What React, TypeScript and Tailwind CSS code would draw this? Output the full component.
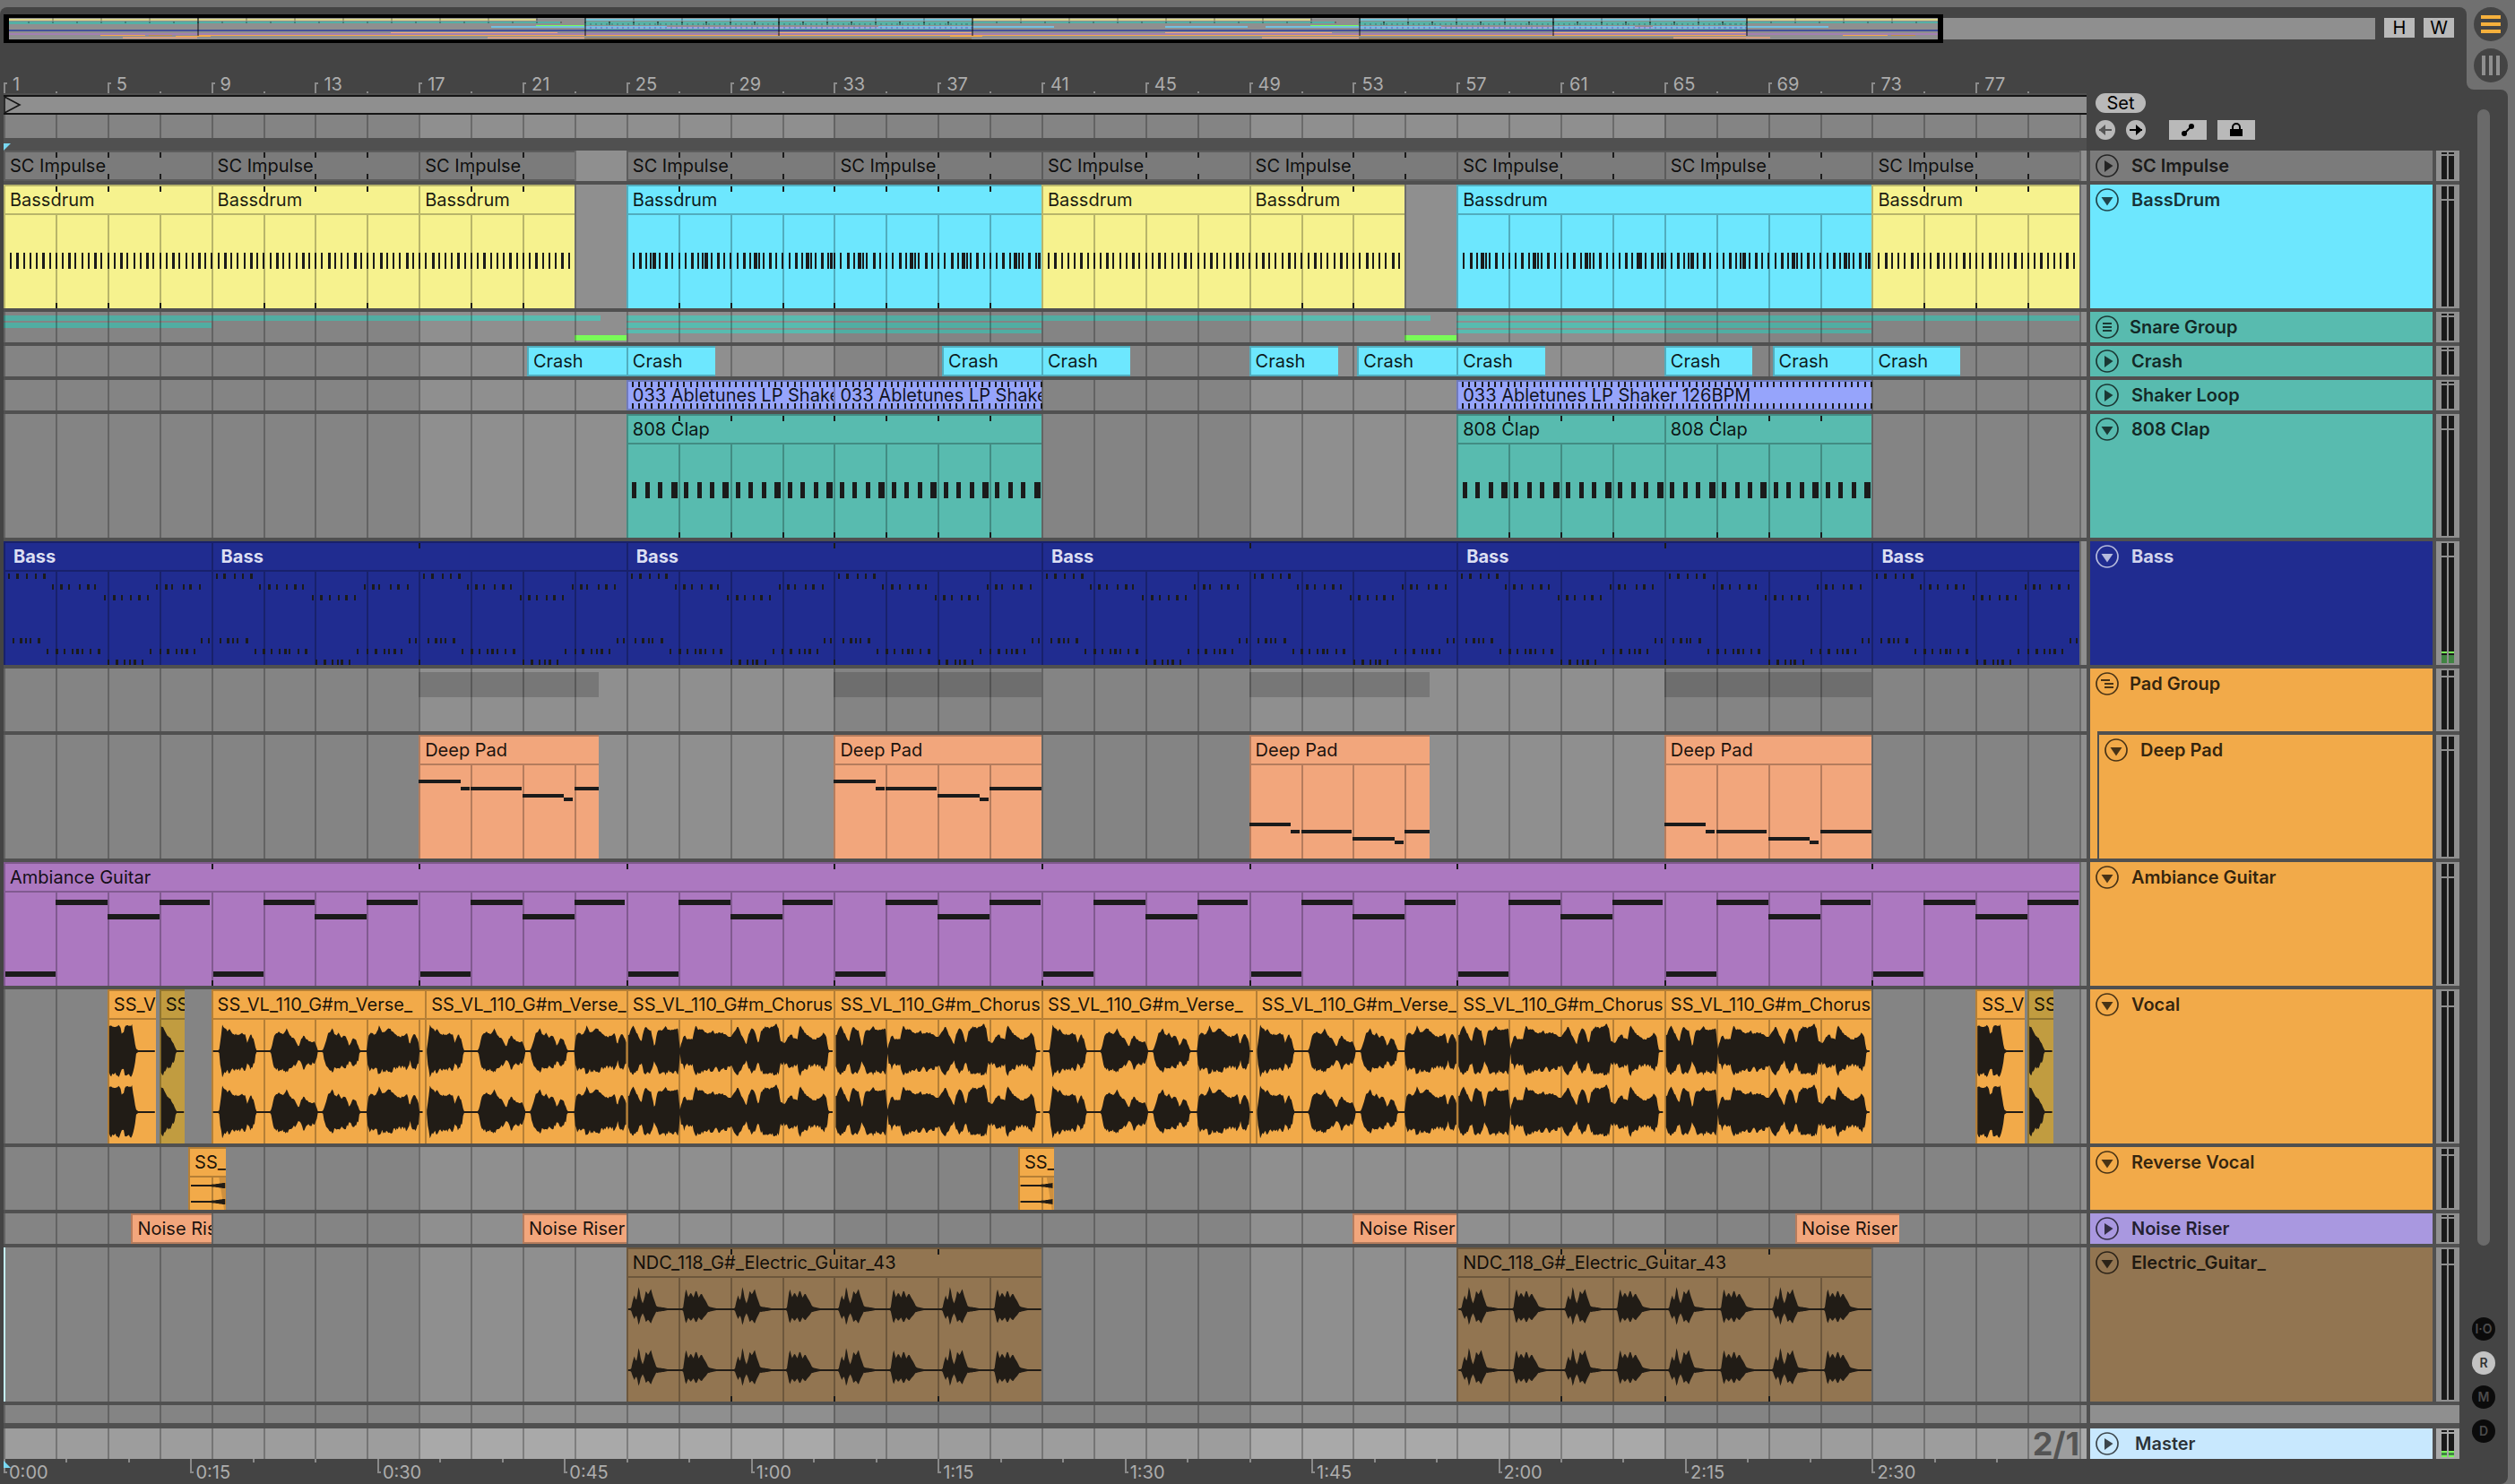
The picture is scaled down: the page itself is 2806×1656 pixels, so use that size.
import React from "react";

const BARS = 80;
const CELLS = Array.from({ length: 40 }, (_, i) => i);
const pct = (bars: number) => `${(bars / BARS) * 100}%`;

type ClipData = { from: number; to: number; name: string; color: string };
type Rect = [x: number, y: number, w: number, h: number];
type Strip = { from: number; to: number; y: number; h: number; color: string };
type Track = {
  name: string;
  height: string;
  px: number;
  color: string;
  icon: "right" | "down" | "group" | "groupOpen";
  clips?: ClipData[];
  strips?: Strip[];
  notes?: Rect[];
  ticks?: number[];
  waves?: string[];
  fades?: string[];
  light?: boolean;
  nested?: boolean;
  level?: "bass" | "master";
  marker?: boolean;
};

const YELLOW = "bg-[#f6f28e]";
const CYAN = "bg-[#6de7fe]";
const TEAL = "bg-[#58bbaf]";
const GREEN = "bg-[#79fb58]";
const PEACH = "bg-[#f2a67c]";
const ORANGE = "bg-[#f2aa49]";
const OLIVE = "bg-[#c19c40]";
const BROWN = "bg-[#927551]";
const BLUE = "bg-[#202c90]";
const PURPLE = "bg-[#ac78c0]";
const PERIWINKLE = "bg-[#96a4fb]";
const GRAY = "bg-[#7b7b7b]";

const PX = 0.0691 / 2;

const clip = (name: string, color: string, ...spans: [number, number][]): ClipData[] =>
  spans.map(([from, to]) => ({ from, to, name, color }));

const range = (from: number, to: number, step: number) => {
  const out: number[] = [];
  for (let v = from; v < to - 0.001; v += step) out.push(v);
  return out;
};

/* ---------- note patterns ---------- */

const kickNotes: Rect[] = [];
const kick = (from: number, to: number, busy: boolean) => {
  range(from + 0.28, to, 0.25).forEach((b, i) => {
    kickNotes.push([b - PX, 76, PX * (i % 4 === 1 ? 3 : 2), 18]);
  });
  if (busy) {
    range(from, to, 2).forEach((b) => {
      kickNotes.push([b + 0.92, 76, PX * 2, 18]);
      kickNotes.push([b + 1.09, 76, PX * 2, 18]);
    });
    range(from + 7.86, to, 8).forEach((b) => kickNotes.push([b, 76, PX * 3, 18]));
  }
};
kick(1, 23, false);
kick(25, 41, true);
kick(41, 55, false);
kick(57, 73, true);
kick(73, 81, false);

const clapNotes: Rect[] = [[25, 41], [57, 73]].flatMap(([a, b]) =>
  range(a + 0.22, b, 0.5).map((x, i): Rect => [x, 76, PX * (i % 4 === 3 ? 7 : 5), 18]),
);

const shakerTicks = [...range(25.2, 41, 0.25), ...range(57.2, 73, 0.25)];

const BASS_ROWS: [number, number[]][] = [
  [36, [0.21, 0.51, 0.91, 1.24, 1.54]],
  [48, [1.89, 2.22, 2.53, 2.92, 3.24, 3.54, 5.92, 6.24, 6.49, 6.93, 7.2, 7.57]],
  [60, [3.92, 4.24, 4.56, 4.92, 5.2, 5.55]],
  [108, [0.37, 0.64, 0.86, 1.02, 1.35, 7.65, 7.9]],
  [120, [1.69, 2.03, 2.34, 2.65, 2.84, 3.03, 3.35, 3.65, 5.66, 6.03, 6.33, 6.67, 6.87, 7.05, 7.35]],
  [132, [4.05, 4.35, 4.67, 4.87, 5.03, 5.35]],
];
const bassNotes: Rect[] = range(1, 81, 8).flatMap((o) =>
  BASS_ROWS.flatMap(([y, xs]) =>
    xs.map((x, i): Rect => [o + x - PX, y, PX * (i % 3 === 1 ? 3 : 2), 6]),
  ),
);

const padPhrase = (o: number, dy: number, end: number): Rect[] => [
  [o, 50 + dy, 1.6, 4],
  [o + 1.6, 58 + dy, 0.35, 4],
  [o + 2, 58 + dy, 1.95, 4],
  [o + 4, 66 + dy, 1.6, 4],
  [o + 5.6, 70 + dy, 0.35, 4],
  [o + 6, 58 + dy, end - o - 6, 4],
];
const padNotes = [
  ...padPhrase(17, 0, 23.93),
  ...padPhrase(33, 0, 41),
  ...padPhrase(49, 48, 55.96),
  ...padPhrase(65, 48, 73),
];

const guitarNotes: Rect[] = range(1, 81, 8).flatMap((o): Rect[] => [
  [o + 0.07, 122, 1.93, 6],
  [o + 2, 42, 2, 6],
  [o + 4, 58, 2, 6],
  [o + 6, 42, 1.95, 6],
]);

/* ---------- wave forms ---------- */

type Env = [number, number][];

const scaleEnv = (pts: [number, number][], x0: number, unit: number): Env =>
  pts.map(([x, a]) => [(x - x0) / unit, a]);

const VERSE = scaleEnv(
  [
    [516, 0], [535, 0], [539, 14], [543, 29], [548, 26], [556, 22], [560, 25], [566, 20], [580, 18], [590, 20],
    [600, 18], [603, 9], [608, 16], [613, 19], [619, 13], [626, 0], [660, 0], [665, 8], [670, 18], [678, 21],
    [686, 20], [694, 20], [699, 26], [704, 20], [712, 15], [720, 13], [728, 5], [734, 12], [741, 18], [748, 13],
    [758, 11], [769, 10], [776, 0], [786, 0], [792, 6], [800, 20], [805, 21], [810, 26], [815, 20], [820, 18],
    [826, 21], [832, 15], [839, 18], [845, 15], [852, 5], [858, 12], [863, 15], [869, 12], [878, 0], [894, 0],
    [898, 18], [904, 21], [912, 19], [919, 21], [924, 29], [930, 22], [938, 21], [945, 24], [950, 26], [956, 22],
    [965, 18], [975, 16], [985, 17], [992, 20], [999, 7], [1005, 17], [1012, 19], [1018, 14], [1023, 3], [1027, 0],
  ],
  516,
  63.07,
);

const CHORUS = scaleEnv(
  [
    [147, 18], [154, 17], [160, 25], [166, 29], [173, 22], [180, 16], [187, 9], [191, 20], [197, 27], [204, 25],
    [212, 23], [218, 12], [222, 4], [227, 18], [232, 24], [240, 23], [250, 28], [260, 23], [272, 24], [284, 25],
    [289, 2], [293, 10], [301, 18], [308, 13], [316, 13], [323, 14], [331, 29], [338, 24], [346, 25], [356, 21],
    [364, 19], [376, 23], [384, 19], [394, 21], [404, 20], [412, 19], [420, 15], [428, 18], [436, 23], [443, 28],
    [450, 20], [458, 14], [465, 7], [472, 20], [480, 27], [488, 22], [497, 8], [504, 22], [515, 27], [525, 26],
    [535, 28], [545, 30], [551, 25], [556, 10], [568, 10], [575, 15], [583, 20], [590, 15], [600, 13], [607, 29],
    [614, 24], [622, 20], [632, 16], [645, 13], [658, 15], [665, 17], [671, 21], [677, 16], [683, 2], [687, 0],
  ],
  147,
  68.8,
);

const GUITAR = scaleEnv(
  [
    [147, 0], [159, 0], [163, 8], [168, 16], [173, 9], [176, 14], [180, 27], [184, 15], [190, 6], [195, 12],
    [199, 21], [205, 16], [212, 23], [217, 15], [222, 9], [227, 3], [245, 2], [270, 0], [297, 0], [301, 12],
    [305, 24], [311, 13], [318, 19], [325, 13], [332, 22], [339, 13], [346, 18], [352, 13], [358, 9], [365, 3],
    [385, 1], [420, 0],
  ],
  147,
  68.8,
);

const level = (env: Env, t: number) => {
  for (let i = 1; i < env.length; i++) {
    if (t <= env[i][0]) {
      const [x0, a0] = env[i - 1];
      const [x1, a1] = env[i];
      return a0 + ((a1 - a0) * (t - x0)) / (x1 - x0 || 1);
    }
  }
  return 0;
};

const jitter = (n: number) => {
  const s = Math.sin(n * 127.1) * 43758.5453;
  return s - Math.floor(s) - 0.5;
};

/* Mirrored envelope between two bars; the phrase restarts every `period` bars counted from `origin`. */
const wave = (from: number, to: number, origin: number, env: Env, period: number, cy: number) => {
  const top: string[] = [];
  const bottom: string[] = [];
  const plucked = env === GUITAR;
  for (let b = from + 0.07; b <= to; b += 0.04) {
    const t = (b - origin) % period;
    const a = level(env, t);
    const n = Math.round(t * 25);
    const up = Math.max(1, a + (a > 6 && !plucked ? jitter(n) * 2 : 0));
    const low = plucked ? a * 0.7 : a * 0.7 + 6.5 + jitter(n + 400) * 5;
    const down = Math.max(1, a > 4 ? low : a);
    top.push(`${(b - 1).toFixed(3)} ${(cy - up).toFixed(1)}`);
    bottom.unshift(`${(b - 1).toFixed(3)} ${(cy + down).toFixed(1)}`);
  }
  return `M${top.join("L")}L${bottom.join("L")}Z`;
};

const stereo = (from: number, to: number, origin: number, env: Env, period: number, c1: number, c2: number) => [
  wave(from, to, origin, env, period, c1),
  wave(from, to, origin, env, period, c2),
];

const STAB: Env = [[0, 26], [0.1, 28], [0.25, 27], [0.42, 29], [0.5, 28], [0.55, 19], [0.62, 20], [0.68, 28], [0.95, 29], [1, 20], [1.1, 3], [1.18, 1], [2, 0]];
const DECAY: Env = [[0, 28], [0.15, 26], [0.3, 18], [0.4, 16], [0.55, 8], [0.68, 0], [1, 0]];
const SWELL: Env = [[0, 0], [0.8, 1], [1.1, 2], [1.3, 3], [1.42, 3]];

const vocalWaves = [
  ...stereo(5, 6.87, 5, STAB, 8, 69, 137),
  ...stereo(7, 7.98, 7, DECAY, 8, 69, 137),
  ...stereo(9, 17.15, 9, VERSE, 8, 69, 137),
  ...stereo(17.24, 25, 17, VERSE, 8, 69, 137),
  ...stereo(25, 32.95, 25, CHORUS, 8, 69, 137),
  ...stereo(33, 40.95, 33, CHORUS, 8, 69, 137),
  ...stereo(41, 49.15, 41, VERSE, 8, 69, 137),
  ...stereo(49.24, 57, 49, VERSE, 8, 69, 137),
  ...stereo(57, 64.95, 57, CHORUS, 8, 69, 137),
  ...stereo(65, 72.95, 65, CHORUS, 8, 69, 137),
  ...stereo(77, 78.87, 77, STAB, 8, 69, 137),
  ...stereo(79, 79.98, 79, DECAY, 8, 69, 137),
];
const reverseWaves = [
  ...stereo(8.15, 9.57, 8.15, SWELL, 8, 43, 61),
  ...stereo(40.12, 41.45, 40.12, SWELL, 8, 43, 61),
];
const electricWaves = [
  ...stereo(25, 41, 25, GUITAR, 4, 69, 137),
  ...stereo(57, 73, 57, GUITAR, 4, 69, 137),
];

/* ---------- tracks ---------- */

const teal = (from: number, to: number, y: number, h: number): Strip => ({ from, to, y, h, color: TEAL });
const shade = (from: number, to: number): Strip => ({ from, to, y: 4, h: 28, color: "bg-[#777777]" });

const TRACKS: Track[] = [
  {
    name: "SC Impulse", height: "h-[34px]", px: 34, color: GRAY, icon: "right",
    clips: clip("SC Impulse", GRAY, [1, 9], [9, 17], [17, 23], [25, 33], [33, 41], [41, 49], [49, 57], [57, 65], [65, 73], [73, 81]),
    ticks: range(3, 81, 2).filter((b) => b % 8 !== 1 && b !== 23),
  },
  {
    name: "BassDrum", height: "h-[138px]", px: 138, color: CYAN, icon: "down",
    clips: [
      ...clip("Bassdrum", YELLOW, [1, 9], [9, 17], [17, 23], [41, 49], [49, 55], [73, 81]),
      ...clip("Bassdrum", CYAN, [25, 41], [57, 73]),
    ],
    notes: kickNotes,
    ticks: [3, 5, 7, 11, 13, 15, 19, 21, 27, 29, 31, 33, 35, 37, 39, 51, 53, 75, 77, 79],
  },
  {
    name: "Snare Group", height: "h-[34px]", px: 34, color: TEAL, icon: "group",
    strips: [
      teal(1, 24, 4, 6), teal(25, 56, 4, 6), teal(57, 81, 4, 6),
      teal(1, 9, 12, 6), teal(25, 41, 12, 6), teal(57, 73, 12, 6),
      teal(25, 41, 20, 4), teal(57, 73, 20, 4),
      { from: 23, to: 25, y: 26, h: 6, color: GREEN },
      { from: 55, to: 57, y: 26, h: 6, color: GREEN },
    ],
  },
  {
    name: "Crash", height: "h-[34px]", px: 34, color: TEAL, icon: "right",
    clips: clip("Crash", CYAN, [21.17, 25], [25, 28.42], [37.17, 41], [41, 44.43], [49, 52.42], [53.17, 57], [57, 60.42], [65, 68.4], [69.17, 73], [73, 76.42]),
  },
  {
    name: "Shaker Loop", height: "h-[34px]", px: 34, color: TEAL, icon: "right",
    clips: clip("033 Abletunes LP Shaker 126BPM", PERIWINKLE, [25, 33], [33, 41], [57, 73]),
    ticks: shakerTicks,
  },
  {
    name: "808 Clap", height: "h-[138px]", px: 138, color: TEAL, icon: "down",
    clips: clip("808 Clap", TEAL, [25, 41], [57, 65], [65, 73]),
    notes: clapNotes,
    ticks: [27, 29, 31, 33, 35, 37, 39, 59, 61, 63, 67, 69, 71],
  },
  {
    name: "Bass", height: "h-[138px]", px: 138, color: BLUE, icon: "down", light: true, level: "bass",
    clips: clip("Bass", BLUE, [1, 9], [9, 25], [25, 41], [41, 57], [57, 73], [73, 81]),
    notes: bassNotes,
    ticks: [17, 33, 49, 65],
  },
  {
    name: "Pad Group", height: "h-[70px]", px: 70, color: ORANGE, icon: "groupOpen",
    strips: [shade(17, 23.93), shade(33, 41), shade(49, 55.96), shade(65, 73)],
  },
  {
    name: "Deep Pad", height: "h-[138px]", px: 138, color: ORANGE, icon: "down", nested: true,
    clips: clip("Deep Pad", PEACH, [17, 23.93], [33, 41], [49, 55.96], [65, 73]),
    notes: padNotes,
  },
  {
    name: "Ambiance Guitar", height: "h-[138px]", px: 138, color: ORANGE, icon: "down",
    clips: clip("Ambiance Guitar", PURPLE, [1, 81]),
    notes: guitarNotes,
    ticks: range(9, 81, 8),
  },
  {
    name: "Vocal", height: "h-[172px]", px: 172, color: ORANGE, icon: "down",
    clips: [
      ...clip("SS_V", ORANGE, [5, 6.87], [77, 78.9]),
      ...clip("SS", OLIVE, [7, 7.98], [79, 80]),
      ...clip("SS_VL_110_G#m_Verse_", ORANGE, [9, 17.24], [17.24, 25], [41, 49.24], [49.24, 57]),
      ...clip("SS_VL_110_G#m_Chorus", ORANGE, [25, 33], [33, 41], [57, 65], [65, 73]),
    ],
    waves: vocalWaves,
  },
  {
    name: "Reverse Vocal", height: "h-[70px]", px: 70, color: ORANGE, icon: "down",
    clips: clip("SS_", ORANGE, [8.12, 9.57], [40.1, 41.47]),
    waves: reverseWaves,
    fades: ["M8.3 34H8.57V70H8.5Z", "M40.2 34H40.47V70H40.4Z"],
  },
  {
    name: "Noise Riser", height: "h-[34px]", px: 34, color: "bg-[#a998e0]", icon: "right",
    clips: clip("Noise Riser", PEACH, [5.92, 9], [21, 25], [53, 57], [70.05, 74.05]),
  },
  {
    name: "Electric_Guitar_", height: "h-[172px]", px: 172, color: BROWN, icon: "down", marker: true,
    clips: clip("NDC_118_G#_Electric_Guitar_43", BROWN, [25, 41], [57, 73]),
    ticks: [29, 33, 37, 61, 65, 69],
    waves: electricWaves,
  },
];

/* ---------- parts ---------- */

function Clip({ data, light }: { data: ClipData; light?: boolean }) {
  return (
    <div
      className={`absolute inset-y-0 overflow-hidden border-l-2 border-black/25 ${data.color}`}
      style={{ left: pct(data.from - 1), width: pct(data.to - data.from) }}
    >
      <div
        className={`flex h-[34px] items-center border-y-2 border-black/25 whitespace-nowrap ${
          light ? "pl-[9px] font-bold text-[#dcdff2]" : "pl-[5px] text-black/90"
        }`}
      >
        {data.name}
      </div>
    </div>
  );
}

function LaneDrawing({ track }: { track: Track }) {
  const { px, clips = [], notes = [], ticks = [], waves = [], fades = [] } = track;
  const lines = px > 34
    ? clips.flatMap((c) => range(1, 81, 2).filter((b) => b > c.from + 0.05 && b < c.to - 0.05))
    : [];
  const rects = (list: Rect[]) => list.map(([x, y, w, h]) => `M${(x - 1).toFixed(3)} ${y}h${w.toFixed(4)}v${h}h${(-w).toFixed(4)}z`).join("");
  const tickRects: Rect[] = ticks.flatMap((b): Rect[] => [
    [b, 2, PX * 2, 6],
    [b, px > 34 ? px - 6 : px - 8, PX * 2, 6],
  ]);
  return (
    <svg
      className="absolute inset-0 h-full w-full"
      viewBox={`0 0 ${BARS} ${px}`}
      preserveAspectRatio="none"
      aria-hidden="true"
    >
      <path d={rects(lines.map((b): Rect => [b, 34, PX * 2, px - 34]))} fill="#000" fillOpacity="0.25" shapeRendering="crispEdges" />
      {fades.map((d) => <path key={d} d={d} fill="#000" fillOpacity="0.15" />)}
      <path d={rects([...tickRects, ...notes])} fill="#1b1b1b" shapeRendering="crispEdges" />
      {waves.map((d) => <path key={d} d={d} fill="#211c16" />)}
    </svg>
  );
}

function Lane({ base = "bg-[#8f8f8f]", children, between }: { base?: string; children?: React.ReactNode; between?: React.ReactNode }) {
  return (
    <div className={`flex min-w-0 flex-1 ${base}`}>
      <div className="relative min-w-0 flex-1">
        {between}
        <div className="absolute inset-0 grid grid-cols-[repeat(40,minmax(0,1fr))]">
          {CELLS.map((i) => (
            <div key={i} className={`border-l-2 border-black/25 ${Math.floor(i / 8) % 2 ? "" : "bg-black/[0.07]"}`} />
          ))}
        </div>
        {children}
      </div>
      <div className="w-2 border-l-2 border-black/25" />
    </div>
  );
}

function FoldIcon({ kind }: { kind: Track["icon"] }) {
  return (
    <svg viewBox="0 0 26 26" className="size-[26px]" fill="none" stroke="currentColor" strokeWidth="1.7" aria-hidden="true">
      <circle cx="13" cy="13" r="12" />
      {kind === "right" && <path d="M10 7L19.500 13L10 20Z" fill="currentColor" stroke="none" />}
      {kind === "down" && <path d="M6.500 10H19.500L13 19.500Z" fill="currentColor" stroke="none" />}
      {kind === "group" && <path d="M8 9H18M8 13H18M8 17H18" strokeWidth="2" />}
      {kind === "groupOpen" && <path d="M6 9H16M10 13H20M10 17H20" strokeWidth="2" />}
    </svg>
  );
}

function MeterBar({ px, level: lv }: { px: number; level?: Track["level"] }) {
  const head = px === 34 ? "h-0.5" : px === 70 ? "h-1.5" : px === 138 ? "h-3.5" : "h-4";
  return (
    <div className="flex w-1.5 flex-col gap-0.5">
      <div className={`bg-[#191919] ${head}`} />
      <div className="flex flex-1 flex-col justify-end bg-[#191919]">
        {lv === "bass" && (
          <>
            <div className="mb-0.5 h-0.5 bg-[#79fb58]" />
            <div className="h-[9px] bg-[#418443]" />
          </>
        )}
        {lv === "master" && (
          <>
            <div className="h-0.5 bg-[#79fb58]" />
            <div className="h-[3px] bg-[#418443]" />
            <div className="h-0.5 bg-[#79fb58]" />
          </>
        )}
      </div>
    </div>
  );
}

function Meter({ px, level: lv, base = "bg-[#8f8f8f]" }: { px: number; level?: Track["level"]; base?: string }) {
  return (
    <div className={`flex w-[26px] shrink-0 gap-0.5 px-1.5 py-0.5 ${base}`}>
      <MeterBar px={px} level={lv} />
      <MeterBar px={px} level={lv} />
    </div>
  );
}

function TrackHeader({ track }: { track: Track }) {
  const group = track.icon === "group" || track.icon === "groupOpen";
  const indent = group ? "pl-3" : track.name === "Master" ? "pl-[18px]" : "pl-3.5";
  const body = (
    <div className={`flex min-w-0 flex-1 items-start pt-1 pl-1.5 ${track.color}`}>
      <button
        type="button"
        aria-label={`Unfold ${track.name}`}
        className={track.light ? "text-[#b6bbdd]" : "text-black/70"}
      >
        <FoldIcon kind={track.icon} />
      </button>
      <span
        className={`flex h-[26px] items-center ${indent} ${
          track.light ? "font-bold text-[#d2d5ec]" : "font-semibold text-black/80"
        }`}
      >
        {track.name}
      </span>
    </div>
  );
  if (!track.nested) return <div className="flex w-[382px] shrink-0">{body}</div>;
  return (
    <div className="flex w-[382px] shrink-0">
      <div className="-mt-1 w-2 bg-[#f2aa49]" />
      <div className="w-0.5 bg-[#505050]" />
      {body}
    </div>
  );
}

function TrackRow({ track }: { track: Track }) {
  return (
    <div className={`flex gap-1 ${track.height}`}>
      <Lane
        between={track.strips?.map((s) => (
          <div
            key={`${s.from}-${s.y}`}
            className={`absolute ${s.color}`}
            style={{ left: pct(s.from - 1), width: pct(s.to - s.from), top: s.y, height: s.h }}
          />
        ))}
      >
        {track.clips?.map((c) => <Clip key={c.from} data={c} light={track.light} />)}
        <LaneDrawing track={track} />
        {track.marker && <div className="absolute inset-y-0 left-0 w-0.5 bg-[#c5f3fd]" />}
      </Lane>
      <TrackHeader track={track} />
      <Meter px={track.px} level={track.level} />
    </div>
  );
}

/* Song miniature: one thin line for each track. */
function Overview() {
  const bar = (from: number, to: number, y: number, h: number, fill: string) => (
    <rect key={`${from}-${y}-${fill}`} x={from - 1} y={y} width={to - from} height={h} fill={fill} />
  );
  const W = 0.075;
  return (
    <div className="relative h-8 grow-[2164] basis-0 bg-black py-1">
      <svg viewBox="0 0 80.15 24" preserveAspectRatio="none" className="block h-6 w-full" shapeRendering="crispEdges" aria-hidden="true">
        <rect width="80.15" height="24" fill="#8f8f8f" />
        {[[1, 23], [41, 55], [73, 81]].map(([a, b]) => bar(a, b, 1, 2, "#dcd68a"))}
        {[[25, 41], [57, 73]].flatMap(([a, b]) => [
          bar(a, b, 1, 2, "#72c8dc"),
          bar(a, b, 4, 4, "#58b3a7"),
          bar(a, b, 10, 2, "#a3a0e0"),
          bar(a, b, 12, 1, "#58b3a7"),
          bar(a, b, 22, 2, "#8e7a62"),
        ])}
        {[[1, 24], [41, 56], [73, 81]].map(([a, b]) => bar(a, b, 4, 2, "#55b0a5"))}
        {bar(1, 9, 4, 3, "#55b0a5")}
        {[[23, 25], [55, 57]].map(([a, b]) => bar(a, b, 8, 1, "#79fb58"))}
        {[[21.15, 28.4], [37.15, 44.4], [49, 52.4], [53.15, 60.4], [65, 68.4], [69.15, 76.4]].map(([a, b]) => bar(a, b, 9, 2, "#72bfe0"))}
        {bar(1, 81, 13, 2, "#45529a")}
        {[[17, 23.9], [33, 41], [49, 55.9], [65, 73]].map(([a, b]) => bar(a, b, 16, 1, "#f3a97c"))}
        {bar(1, 81, 17, 2, "#a37fb2")}
        {[[5, 6.87], [9, 73], [77, 78.87]].map(([a, b]) => bar(a, b, 19, 1, "#f2aa49"))}
        {[[7, 7.98], [79, 80]].map(([a, b]) => bar(a, b, 19, 1, "#c19040"))}
        {[[8.12, 9.57], [40.1, 41.45]].map(([a, b]) => bar(a, b, 20, 1, "#f2aa49"))}
        {[[5.92, 9], [21, 25], [53, 57], [70, 74]].map(([a, b]) => bar(a, b, 21, 2, "#d39d80"))}
        {[[25, 41], [57, 73]].flatMap(([a, b]) => [
          ...range(a + 0.22, b, 0.222).map((x) => <rect key={`s${x}`} x={x - 1} y="6" width={W} height="2" fill="#47948a" />),
          ...range(a + 0.22, b, 0.222).map((x) => <rect key={`k${x}`} x={x - 1} y="10" width={W} height="2" fill="#6f8ad0" />),
          ...range(a + 1, b, 1).map((x) => <rect key={`t${x}`} x={x - 1} y="4" width={W} height="4" fill="#3b7a71" />),
        ])}
        {[9, 25, 33, 41, 57, 65, 73].map((b) => <rect key={b} x={b - 1} y="0" width={W} height="20" fill="#000" fillOpacity=".45" />)}
        {range(3, 81, 2).map((b) => <rect key={b} x={b - 1} y="0" width={W} height="3" fill="#000" fillOpacity=".22" />)}
        {range(2, 81, 1).map((b) => <rect key={b} x={b - 1} y="4" width={W} height="2" fill="#000" fillOpacity=".25" />)}
      </svg>
      <div className="absolute inset-0 border-x-[6px] border-black" />
    </div>
  );
}

function TopBar() {
  return (
    <div className="flex items-start pt-2 pr-1.5">
      <div className="flex flex-1 items-center">
        <Overview />
        <div className="h-6 grow-[482] basis-0 bg-[#8f8f8f]" />
      </div>
      <div className="flex gap-2.5 pt-1 pl-2.5">
        {["H", "W"].map((t) => (
          <button key={t} type="button" className="flex h-[22px] w-[34px] items-center justify-center bg-[#b9b9b9] text-black">
            {t}
          </button>
        ))}
      </div>
    </div>
  );
}

function BarRuler() {
  return (
    <div className="mr-2 grid h-14 grid-cols-[repeat(20,minmax(0,1fr))]">
      {range(1, 81, 4).map((b) => (
        <div key={b} className="flex items-end">
          <div className="h-3 w-1 border-t-2 border-l-2 border-[#8a8a8a]" />
          <div className="flex-1 pl-1.5 text-[#adadad]">{b}</div>
          <div className="h-0.5 w-0.5 bg-[#8a8a8a]" />
          <div className="w-[calc(50%-2px)]" />
        </div>
      ))}
    </div>
  );
}

function TimeRuler() {
  const fmt = (s: number) => `${Math.floor(s / 60)}:${String(s % 60).padStart(2, "0")}`;
  return (
    <div className="relative flex h-7 min-w-0 flex-1 overflow-hidden pr-2">
      {range(0, 165, 15).map((s) => (
        <div key={s} className="grid w-[9%] grid-cols-3">
          <div className="flex items-start">
            <div className="h-4 w-1 shrink-0 border-b-2 border-l-2 border-[#8a8a8a]" />
            <div className="flex h-[30px] items-center pl-0.5 text-[#adadad]">{fmt(s)}</div>
          </div>
          <div className="h-1 border-l-2 border-[#8a8a8a]" />
          <div className="h-1 border-l-2 border-[#8a8a8a]" />
        </div>
      ))}
      <svg viewBox="0 0 8 8" className="absolute top-0.5 left-0 size-2" aria-hidden="true">
        <path d="M0 0L8 8H0Z" fill="#79d8f2" />
      </svg>
    </div>
  );
}

function SetControls() {
  return (
    <div className="w-[412px] shrink-0 pt-14 pl-1.5">
      <button type="button" className="flex h-[22px] w-14 items-center justify-center rounded-full bg-[#b9b9b9] text-black">
        Set
      </button>
      <div className="mt-2 flex">
        <button type="button" aria-label="Previous locator" className="size-[22px] rounded-full bg-[#b9b9b9] text-[#555]">
          <svg viewBox="0 0 22 22" className="size-[22px]" aria-hidden="true">
            <path d="M4 11H18" stroke="currentColor" strokeWidth="2" />
            <path d="M11 5V17L4 11Z" fill="currentColor" />
          </svg>
        </button>
        <button type="button" aria-label="Next locator" className="ml-3 size-[22px] rounded-full bg-[#b9b9b9] text-black">
          <svg viewBox="0 0 22 22" className="size-[22px]" aria-hidden="true">
            <path d="M4 11H18" stroke="currentColor" strokeWidth="2" />
            <path d="M11 5V17L18 11Z" fill="currentColor" />
          </svg>
        </button>
        <button type="button" aria-label="Automation" className="ml-[26px] flex h-[22px] w-[42px] items-center justify-center bg-[#b9b9b9]">
          <svg viewBox="0 0 16 16" className="size-4" aria-hidden="true">
            <path d="M4 12L12 4" stroke="#000" strokeWidth="2" />
            <circle cx="4" cy="12" r="3" />
            <circle cx="12" cy="4" r="3" />
          </svg>
        </button>
        <button type="button" aria-label="Lock envelopes" className="ml-3 flex h-[22px] w-[42px] items-center justify-center bg-[#b9b9b9]">
          <svg viewBox="0 0 16 16" className="size-4" aria-hidden="true">
            <path d="M1 7H15V15H1Z" />
            <path d="M4 8V5A4 4 0 0 1 12 5V8" fill="none" stroke="#000" strokeWidth="2" />
          </svg>
        </button>
      </div>
    </div>
  );
}

const MASTER: Track = { name: "Master", height: "h-[34px]", px: 34, color: "bg-[#c8e8fe]", icon: "right" };

function SideRail() {
  return (
    <div className="flex w-[46px] shrink-0 flex-col bg-[#444444]">
      <div className="flex h-[92px] flex-col items-end gap-2 rounded-bl-lg bg-[#707070]">
        <button type="button" aria-label="Arrangement view" className="flex size-[38px] items-center justify-center rounded-full bg-[#444444]">
          <svg viewBox="0 0 22 20" className="h-5 w-[22px]" aria-hidden="true">
            <path d="M0 0H22V4H0ZM0 8H22V12H0ZM0 16H22V20H0Z" fill="#f5b03c" />
          </svg>
        </button>
        <button type="button" aria-label="Session view" className="flex size-[38px] items-center justify-center rounded-full bg-[#444444]">
          <svg viewBox="0 0 20 22" className="h-[22px] w-5" aria-hidden="true">
            <path d="M0 0H4V22H0ZM8 0H12V22H8ZM16 0H20V22H16Z" fill="#8f8f8f" />
          </svg>
        </button>
      </div>
      <div className="flex flex-1 flex-col bg-[#707070]">
        <div className="flex flex-1 flex-col items-center rounded-r-lg bg-[#444444] pt-[22px] pr-2 pb-[46px]">
          <div className="w-3.5 flex-1 rounded-full bg-[#6a6a6a]" />
          <div className="mt-20 flex flex-col gap-3">
            {["I·O", "R", "M", "D"].map((t) => (
              <button
                key={t}
                type="button"
                className={`flex size-[26px] items-center justify-center rounded-full text-[14px] font-semibold ${
                  t === "R" ? "bg-[#c3c3c3] text-[#333]" : "bg-[#0b0b0b] text-[#4c4c4c]"
                }`}
              >
                {t}
              </button>
            ))}
          </div>
        </div>
      </div>
    </div>
  );
}

export default function App() {
  return (
    <div className="flex min-h-screen bg-[#707070] pt-2 pr-2 font-['Inter',sans-serif] text-[20px] leading-none text-black">
      <main className="min-w-0 flex-1 rounded-t-lg bg-[#444444] pr-2 pl-1">
        <TopBar />
        <div className="flex gap-1">
          <div className="min-w-0 flex-1">
            <BarRuler />
            <div className="h-0.5 bg-[#505050]" />
            <div className="h-[22px] border-y-2 border-[#151515] bg-[#8f8f8f]">
              <svg viewBox="0 0 20 18" className="block h-[18px] w-5" aria-hidden="true">
                <path d="M1 0V18M1 0L18 9L1 18" fill="none" stroke="#151515" strokeWidth="1.600" />
              </svg>
            </div>
            <div className="flex h-[26px]">
              <Lane />
            </div>
            <div className="flex h-3.5 items-end bg-[#505050]">
              <svg viewBox="0 0 8 8" className="size-2" aria-hidden="true">
                <path d="M0 0H8L0 8Z" fill="#79d8f2" />
              </svg>
            </div>
          </div>
          <SetControls />
        </div>
        <div className="flex flex-col gap-1 bg-[#505050]">
          {TRACKS.map((t) => <TrackRow key={t.name} track={t} />)}
          <div className="flex h-5 gap-1">
            <Lane />
            <div className="w-[412px] shrink-0 bg-[#8f8f8f]" />
          </div>
          <div className="mt-0.5 flex h-[34px] gap-1">
            <Lane base="bg-[#a9a9a9]">
              <div className="absolute inset-y-0 right-0 flex items-center text-[36px] font-bold text-[#545454]">2/1</div>
            </Lane>
            <TrackHeader track={MASTER} />
            <Meter px={34} level="master" base="bg-[#a9a9a9]" />
          </div>
        </div>
        <div className="flex gap-1">
          <TimeRuler />
          <div className="w-[412px] shrink-0" />
        </div>
      </main>
      <SideRail />
    </div>
  );
}
